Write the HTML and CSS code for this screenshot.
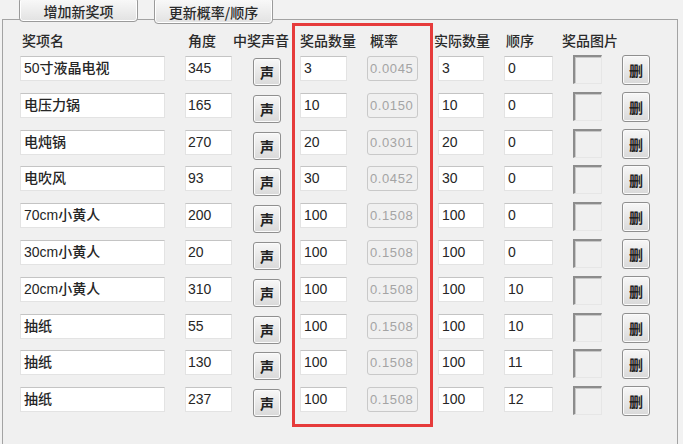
FILE: index.html
```html
<!DOCTYPE html>
<html lang="zh">
<head>
<meta charset="utf-8">
<title>奖项设置</title>
<link rel="stylesheet" href="styles.css">
</head>
<body>
<div class="tabs">
  <div class="tab">增加新奖项</div>
  <div class="tab tab2">更新概率/顺序</div>
</div>
<div class="panel">
  <div class="head">
    <span class="h-name">奖项名</span>
    <span class="h-angle">角度</span>
    <span class="h-sound">中奖声音</span>
    <span class="h-qty">奖品数量</span>
    <span class="h-prob">概率</span>
    <span class="h-act">实际数量</span>
    <span class="h-ord">顺序</span>
    <span class="h-img">奖品图片</span>
  </div>
  <div class="rows">
    <div class="row"><div class="field">50寸液晶电视</div><div class="field">345</div><div class="btn">声</div><div class="field">3</div><div class="field dis">0.0045</div><div class="field">3</div><div class="field">0</div><div class="pic"></div><div class="btn">删</div></div>
    <div class="row"><div class="field">电压力锅</div><div class="field">165</div><div class="btn">声</div><div class="field">10</div><div class="field dis">0.0150</div><div class="field">10</div><div class="field">0</div><div class="pic"></div><div class="btn">删</div></div>
    <div class="row"><div class="field">电炖锅</div><div class="field">270</div><div class="btn">声</div><div class="field">20</div><div class="field dis">0.0301</div><div class="field">20</div><div class="field">0</div><div class="pic"></div><div class="btn">删</div></div>
    <div class="row"><div class="field">电吹风</div><div class="field">93</div><div class="btn">声</div><div class="field">30</div><div class="field dis">0.0452</div><div class="field">30</div><div class="field">0</div><div class="pic"></div><div class="btn">删</div></div>
    <div class="row"><div class="field">70cm小黄人</div><div class="field">200</div><div class="btn">声</div><div class="field">100</div><div class="field dis">0.1508</div><div class="field">100</div><div class="field">0</div><div class="pic"></div><div class="btn">删</div></div>
    <div class="row"><div class="field">30cm小黄人</div><div class="field">20</div><div class="btn">声</div><div class="field">100</div><div class="field dis">0.1508</div><div class="field">100</div><div class="field">0</div><div class="pic"></div><div class="btn">删</div></div>
    <div class="row"><div class="field">20cm小黄人</div><div class="field">310</div><div class="btn">声</div><div class="field">100</div><div class="field dis">0.1508</div><div class="field">100</div><div class="field">10</div><div class="pic"></div><div class="btn">删</div></div>
    <div class="row"><div class="field">抽纸</div><div class="field">55</div><div class="btn">声</div><div class="field">100</div><div class="field dis">0.1508</div><div class="field">100</div><div class="field">10</div><div class="pic"></div><div class="btn">删</div></div>
    <div class="row"><div class="field">抽纸</div><div class="field">130</div><div class="btn">声</div><div class="field">100</div><div class="field dis">0.1508</div><div class="field">100</div><div class="field">11</div><div class="pic"></div><div class="btn">删</div></div>
    <div class="row"><div class="field">抽纸</div><div class="field">237</div><div class="btn">声</div><div class="field">100</div><div class="field dis">0.1508</div><div class="field">100</div><div class="field">12</div><div class="pic"></div><div class="btn">删</div></div>
  </div>
</div>
<div class="highlight"></div>
</body>
</html>
```

FILE: styles.css
```css
html, body {
  margin: 0;
  padding: 0;
  background: #f2f2f2;
  width: 683px;
  height: 444px;
  overflow: hidden;
  font-family: "Liberation Sans", "Noto Sans CJK SC", sans-serif;
  font-size: 14px;
  color: #222;
}

.tabs {
  position: relative;
  z-index: 1;
  display: flex;
  align-items: flex-start;
  gap: 16px;
  height: 19px;
  padding-left: 19px;
}

.tab {
  box-sizing: border-box;
  width: 119px;
  height: 25px;
  margin-top: -3px;
  border: 1px solid #9a9a9a;
  border-radius: 4px;
  background: linear-gradient(#fafafa, #e2e2e2);
  box-shadow: inset 0 0 0 1px #ffffff;
  display: flex;
  align-items: center;
  justify-content: center;
  padding-top: 3px;
  font-family: "Noto Sans CJK SC", sans-serif;
  font-size: 14px;
  font-weight: 500;
  color: #2a2a2a;
}

.tab2 {
  height: 27px;
}

.panel {
  box-sizing: border-box;
  margin-left: 2px;
  width: 676px;
  height: 440px;
  border: 1px solid #a3a3a3;
  background: #f0f0f0;
  padding: 10px 0 0 17px;
}

.head {
  display: flex;
  height: 20px;
  line-height: 20px;
  padding-left: 2px;
  font-family: "Noto Sans CJK SC", sans-serif;
  font-size: 14px;
  font-weight: 500;
  color: #2a2a2a;
  white-space: nowrap;
}

.h-name { width: 166px; }
.h-angle { width: 45px; }
.h-sound { width: 67px; }
.h-qty { width: 70px; }
.h-prob { width: 64px; }
.h-act { width: 72px; }
.h-ord { width: 56px; }
.h-img { width: 70px; }

.rows {
  margin-top: 6px;
}

.row {
  display: grid;
  grid-template-columns: 145px 47px 28px 47px 51px 46px 49px 29px 28px;
  column-gap: 20px;
  height: 25px;
  margin-bottom: 11.8px;
}

.field {
  box-sizing: border-box;
  height: 25px;
  background: #ffffff;
  border: 1px solid #e3e3e3;
  border-top: 1px solid #c4c4c4;
  padding-left: 3px;
  line-height: 23px;
  white-space: nowrap;
  overflow: hidden;
  font-family: "Liberation Sans", "Noto Sans CJK SC", sans-serif;
  font-size: 14px;
  font-weight: 500;
  color: #262626;
}

.row .field:nth-child(2) { padding-left: 2px; }

.field.dis {
  background: #f0f0f0;
  border: 1px solid #c9c9c9;
  border-radius: 3px;
  color: #a4a4a4;
  font-weight: 400;
  letter-spacing: 0.6px;
  font-size: 13px;
  padding-left: 2px;
}

.btn {
  box-sizing: border-box;
  width: 28px;
  height: 28px;
  margin-top: 2px;
  margin-left: 1px;
  border: 1px solid #8f8f8f;
  border-radius: 3px;
  background: linear-gradient(#f7f7f7, #d9d9d9);
  box-shadow: inset 0 0 0 1px #fbfbfb;
  display: flex;
  align-items: center;
  justify-content: center;
  font-family: "Noto Sans CJK SC", sans-serif;
  font-size: 14px;
  font-weight: 700;
  color: #222;
}

.row .btn:last-child {
  margin-top: -1px;
  margin-left: 0;
  height: 30px;
}

.pic {
  box-sizing: border-box;
  width: 29px;
  height: 29px;
  margin-top: -1px;
  border-top: 2px solid #8c8c8c;
  border-left: 2px solid #8c8c8c;
  border-right: 1px solid #e6e6e6;
  border-bottom: 1px solid #e6e6e6;
  box-shadow: inset 1px 1px 0 #c8c8c8;
}

.highlight {
  position: absolute;
  left: 292px;
  top: 23px;
  width: 141px;
  height: 404px;
  box-sizing: border-box;
  border: 3px solid #e63b3b;
  pointer-events: none;
}
```
